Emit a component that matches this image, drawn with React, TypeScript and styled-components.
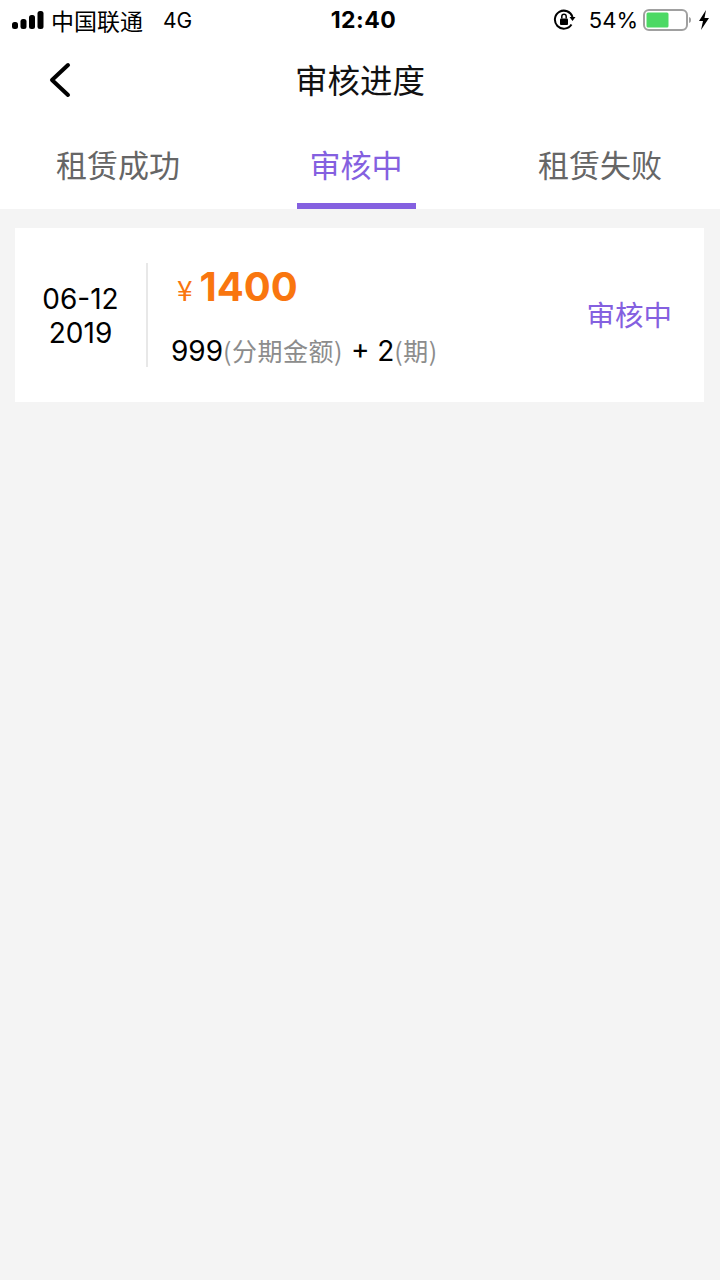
import React from "react";
import styled, { createGlobalStyle } from "styled-components";

const Global = createGlobalStyle`
  html, body { margin: 0; padding: 0; background: #f4f4f4; }
  * { box-sizing: border-box; }
  body { font-family: Inter, "Noto Sans CJK SC", sans-serif; }
`;
const CJK = `"Noto Sans CJK SC", sans-serif`;
const LATIN = `Inter, "Noto Sans CJK SC", sans-serif`;

const Page = styled.div`
  width: 720px;
  height: 1280px;
  background: #f4f4f4;
  overflow: hidden;
`;
const Header = styled.header`
  background: #fff;
  height: 209px;
  display: flex;
  flex-direction: column;
`;
const StatusBar = styled.div`
  height: 40px;
  display: flex;
  align-items: center;
  justify-content: space-between;
  padding: 0 10px 0 12px;
  color: #000;
  font-family: ${LATIN};
  font-size: 22px;
`;
const StatusSide = styled.div<{ $width: number; $end?: boolean }>`
  width: ${(p) => p.$width}px;
  display: flex;
  align-items: center;
  justify-content: ${(p) => (p.$end ? "flex-end" : "flex-start")};
`;
const Carrier = styled.span`
  margin-left: 7px;
  font-family: ${CJK};
  font-size: 23px;
  line-height: 40px;
`;
const Network = styled.span`
  margin-left: 20px;
  font-size: 21px;
`;
const Clock = styled.span`
  font-weight: 700;
  font-size: 23px;
  letter-spacing: 0.5px;
`;
const Battery = styled.span`
  margin-left: 12px;
  font-size: 22px;
`;
const BatteryIcon = styled.svg`
  margin-left: 5px;
`;
const BoltIcon = styled.svg`
  margin-left: 7px;
`;
const NavBar = styled.div`
  position: relative;
  height: 72px;
  display: flex;
  align-items: center;
  justify-content: center;
  margin-top: 2px;
`;
const BackButton = styled.button`
  position: absolute;
  left: 46px;
  top: 20px;
  width: 28px;
  height: 36px;
  padding: 0;
  border: 0;
  background: none;
  display: flex;
`;
const Title = styled.h1`
  margin: 0;
  font-family: ${CJK};
  font-size: 32.5px;
  font-weight: 400;
  color: #111;
`;
const Tabs = styled.nav`
  flex: 1;
  display: grid;
  grid-template-columns: 236px 240px 244px;
`;
const Tab = styled.div<{ $active?: boolean }>`
  position: relative;
  display: flex;
  justify-content: center;
  padding-top: 27px;
  font-family: ${CJK};
  font-size: 31px;
  line-height: 46px;
  color: ${(p) => (p.$active ? "#8460e0" : "#666")};
  &:last-child {
    padding-left: 4px;
  }
  ${(p) =>
    p.$active &&
    `&::after { content: ""; position: absolute; left: 61px; bottom: 0; width: 119px; height: 6px; background: #8460e0; }`}
`;
const Main = styled.main`
  padding: 19px 16px 0 15px;
`;
const Card = styled.article`
  height: 174px;
  background: #fff;
  display: flex;
  align-items: center;
`;
const DateCol = styled.div`
  width: 133px;
  height: 104px;
  padding-top: 2px;
  border-right: 2px solid #e8e8e8;
  display: flex;
  flex-direction: column;
  align-items: center;
  justify-content: center;
  font-family: ${LATIN};
  font-size: 28px;
  line-height: 34px;
  color: #000;
`;
const Info = styled.div`
  flex: 1;
  padding-left: 23px;
  display: flex;
  flex-direction: column;
  margin-top: 6px;
`;
const Amount = styled.div`
  display: flex;
  align-items: baseline;
  color: #f9760f;
  font-family: ${LATIN};
  padding-left: 6px;
  margin-top: -4px;
`;
const Yen = styled.span`
  font-size: 28px;
  margin-right: 7px;
  font-family: ${CJK};
`;
const Total = styled.span`
  font-size: 40px;
  font-weight: 700;
  line-height: 50px;
`;
const Terms = styled.div`
  margin-top: 19px;
  font-family: ${LATIN};
  font-size: 28px;
  line-height: 38px;
  color: #000;
  white-space: nowrap;
`;
const Note = styled.span`
  font-family: ${CJK};
  font-size: 25px;
  letter-spacing: 0.5px;
  color: #8c8c8c;
`;
const State = styled.div`
  margin: -4px 32px 0 0;
  font-family: ${CJK};
  font-size: 28.5px;
  color: #8460e0;
`;

export default function App() {
  return (
    <Page>
      <Global />
      <Header>
        <StatusBar>
          <StatusSide $width={255}>
            <svg width="32" height="20" viewBox="0 0 32 20" fill="#000" aria-hidden>
              <rect x="0" y="12" width="6" height="7" rx="2.5" />
              <rect x="8.5" y="9" width="6" height="10" rx="2.5" />
              <rect x="17" y="5" width="6" height="14" rx="2.5" />
              <rect x="25.5" y="1" width="6" height="18" rx="2.5" />
            </svg>
            <Carrier>中国联通</Carrier>
            <Network>4G</Network>
          </StatusSide>
          <Clock>12:40</Clock>
          <StatusSide $width={250} $end>
            <svg width="24" height="22" viewBox="0 0 24 22" fill="none" aria-hidden>
              <path d="M18.5 15.5A9 9 0 1 1 19.5 8" stroke="#000" strokeWidth="2" />
              <path d="M16.5 8h6l-3 4z" fill="#000" />
              <rect x="7" y="9.500" width="8" height="6.500" rx="1" fill="#000" />
              <path d="M8.800 9.500V7.500a2.200 2.200 0 0 1 4.400 0v2" stroke="#000" strokeWidth="1.500" />
            </svg>
            <Battery>54%</Battery>
            <BatteryIcon width="48" height="22" viewBox="0 0 48 22" fill="none" aria-hidden>
              <rect x="1" y="1" width="43" height="20" rx="5" stroke="#a0a0a0" strokeWidth="2" />
              <rect x="3.500" y="3.500" width="22" height="15" rx="1.500" fill="#4cd964" />
              <path d="M46 8c1.500.4 2 1.500 2 3s-.5 2.600-2 3z" fill="#a0a0a0" />
            </BatteryIcon>
            <BoltIcon width="12" height="20" viewBox="0 0 12 20" fill="#000" aria-hidden>
              <path d="M8 0 1 11h4l-2 9 8-12H6.500z" />
            </BoltIcon>
          </StatusSide>
        </StatusBar>
        <NavBar>
          <BackButton aria-label="返回">
            <svg width="28" height="36" viewBox="0 0 28 36" fill="none" aria-hidden>
              <path d="M22 3 6 18l16 15" stroke="#000" strokeWidth="4" strokeLinecap="round" strokeLinejoin="round" />
            </svg>
          </BackButton>
          <Title>审核进度</Title>
        </NavBar>
        <Tabs>
          <Tab>租赁成功</Tab>
          <Tab $active>审核中</Tab>
          <Tab>租赁失败</Tab>
        </Tabs>
      </Header>
      <Main>
        <Card>
          <DateCol>
            <span>06-12</span>
            <span>2019</span>
          </DateCol>
          <Info>
            <Amount>
              <Yen>¥</Yen>
              <Total>1400</Total>
            </Amount>
            <Terms>
              999<Note>(分期金额)</Note> + 2<Note>(期)</Note>
            </Terms>
          </Info>
          <State>审核中</State>
        </Card>
      </Main>
    </Page>
  );
}
